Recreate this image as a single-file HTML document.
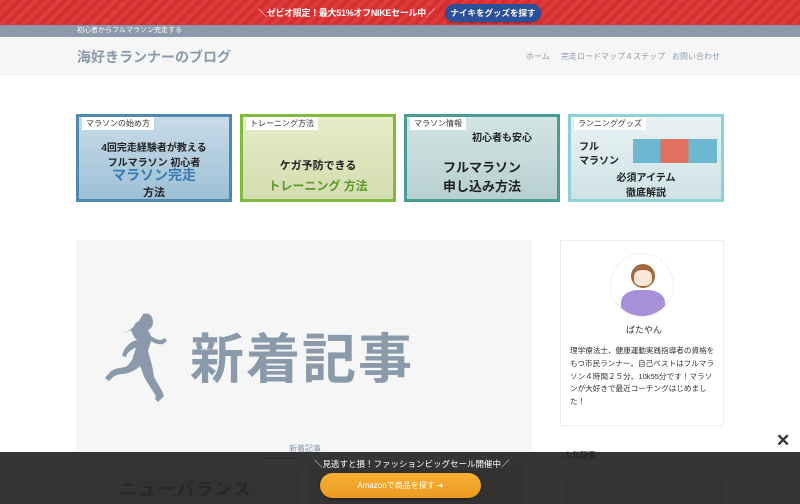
<!DOCTYPE html>
<html><head><meta charset="utf-8"><style>
*{margin:0;padding:0;box-sizing:border-box}
body{width:800px;height:504px;overflow:hidden;background:#fff;font-family:"Liberation Sans","Noto Sans CJK JP",sans-serif;position:relative}
.abs{position:absolute}
.top{left:0;top:0;width:800px;height:25px;background:repeating-linear-gradient(135deg,#e03a3a 0 4px,#d42f30 4px 8px)}
.top .t{left:258px;top:6px;color:#fff;font-size:9px;font-weight:bold;white-space:nowrap;letter-spacing:-0.3px}
.top .b{left:445px;top:4px;width:96px;height:18px;border-radius:9px;background:#2a4f9c;color:#fff;font-size:8.5px;font-weight:bold;text-align:center;line-height:18px;box-shadow:0 1px 2px rgba(0,0,0,.3)}
.sub{left:0;top:25px;width:800px;height:12px;background:#8a9aab;color:#fff;font-size:7px;line-height:12px;padding-left:77px}
.hdr{left:0;top:37px;width:800px;height:39px;background:#f6f6f6}
.title{left:77px;top:47px;font-size:14px;font-weight:bold;color:#8a9aab}
.nav{top:51px;font-size:8px;color:#8a9aab}
.card{top:114px;width:156px;height:88px;border:3px solid;overflow:hidden}
.card .lb{position:absolute;left:3px;top:0;background:#fff;font-size:8px;color:#333;padding:1px 4px}
.card .tx{position:absolute;left:0;right:0;text-align:center;font-weight:bold;color:#222}
.main{left:76px;top:240px;width:456px;height:264px;background:#f6f6f6}
.big{left:190px;top:315px;font-size:54px;font-weight:bold;color:#8a9aab;letter-spacing:2px}
.side{left:560px;top:240px;width:164px;height:186px;border:1px solid #eee;background:#fff}
.ov{left:0;top:452px;width:800px;height:52px;background:rgba(38,38,38,.93)}
</style></head><body>
<div class="abs top"><div class="abs t">＼ゼビオ限定！最大51%オフNIKEセール中／</div><div class="abs b">ナイキをグッズを探す</div></div>
<div class="abs sub">初心者からフルマラソン完走する</div>
<div class="abs hdr"></div>
<div class="abs title">海好きランナーのブログ</div>
<div class="abs nav" style="left:526px">ホーム</div>
<div class="abs nav" style="left:561px">完走ロードマップ４ステップ</div>
<div class="abs nav" style="left:672px">お問い合わせ</div>

<div class="abs card" style="left:76px;border-color:#4f88b2;background:linear-gradient(#c8dbe8,#9dc0d6)"><div class="lb">マラソンの始め方</div><div class="tx" style="top:22px;font-size:10px">4回完走経験者が教える<br>フルマラソン 初心者</div><div class="tx" style="top:50px;font-size:14px;color:#3a7cb0;line-height:16px">マラソン完走<br><span style="font-size:11px;color:#222">方法</span></div></div>
<div class="abs card" style="left:240px;border-color:#7fba3e;background:linear-gradient(#e6ecc8,#d4dcb0)"><div class="lb">トレーニング方法</div><div class="tx" style="top:40px;font-size:11px">ケガ予防できる</div><div class="tx" style="top:60px;font-size:12px;color:#5a9a2a">トレーニング 方法</div></div>
<div class="abs card" style="left:404px;border-color:#4a9c92;background:linear-gradient(#d2e4e4,#b8d0d0)"><div class="lb">マラソン情報</div><div class="tx" style="top:12px;font-size:10px;left:40px">初心者も安心</div><div class="tx" style="top:40px;font-size:13px">フルマラソン<br>申し込み方法</div></div>
<div class="abs card" style="left:568px;border-color:#8dd0d8;background:linear-gradient(#e8f2f4,#cfe2e6)"><div class="lb">ランニンググッズ</div><div class="abs" style="left:8px;top:24px;font-size:10px;font-weight:bold;color:#222;line-height:14px">フル<br>マラソン</div><div class="abs" style="left:62px;top:22px;width:84px;height:24px;background:linear-gradient(90deg,#6cb8d0 33%,#e07060 33% 66%,#6cb8d0 66%)"></div><div class="tx" style="top:52px;font-size:10px">必須アイテム<br>徹底解説</div></div>

<div class="abs main"></div>
<svg class="abs" style="left:105px;top:312px" width="76" height="92" viewBox="0 0 76 92"><path fill="#8a9aab" d="M38 2c6-2 10 2 10 8 0 4-2 7-5 8l3 6c3 2 6 4 10 4l4-2 2 3-4 3c-5 1-9-1-12-3l-3 10c2 8 5 16 6 26l8 14 2 5-6 6-3-3 1-3-9-14c-4-6-5-12-7-16-4 4-10 7-16 8-5 0-9 1-12 4l-3 3-4-3 5-6c5-4 10-4 15-5 3-1 5-4 7-7l4-12c-3 0-6 3-9 6l-1 3-4-1 2-6c4-6 8-9 13-10-3-2-5-7-6-10-3 1-6 3-7 3 4-2 8-4 10-7 1-3 3-4 5-5z"/></svg>
<div class="abs big">新着記事</div>
<div class="abs" style="left:289px;top:443px;font-size:8px;color:#8a9aab">新着記事</div>
<div class="abs" style="left:260px;top:458px;width:40px;height:1px;background:#555"></div>

<div class="abs side"></div>
<div class="abs" style="left:610px;top:253px;width:64px;height:64px;border-radius:50%;background:#fff;border:1px solid #f0f0f0;overflow:hidden"><div class="abs" style="left:20px;top:10px;width:24px;height:24px;border-radius:50%;background:#a0683c"></div><div class="abs" style="left:23px;top:16px;width:18px;height:16px;border-radius:40%;background:#fbe6d8"></div><div class="abs" style="left:10px;top:36px;width:44px;height:30px;border-radius:40% 40% 0 0;background:#a890d8"></div></div>
<div class="abs" style="left:626px;top:323px;font-size:9px;color:#333">ばたやん</div>
<div class="abs" style="left:570px;top:345px;width:148px;font-size:7.6px;line-height:12.8px;color:#333">理学療法士、健康運動実践指導者の資格をもつ市民ランナー。自己ベストはフルマラソン４時間２５分、10k55分です！マラソンが大好きで最近コーチングはじめました！</div>

<div class="abs" style="left:86px;top:465px;width:214px;height:39px;background:#dfe4ea"><div style="font-size:17px;font-weight:bold;color:#2a4f8c;padding:10px 0 0 34px;letter-spacing:2px">ニューバランス</div></div>
<div class="abs" style="left:310px;top:465px;width:212px;height:39px;background:#d8cfc4"></div>
<div class="abs" style="left:564px;top:450px;font-size:8px;font-weight:bold;color:#333">人気記事</div>
<div class="abs" style="left:560px;top:467px;width:164px;height:1px;background:#ccc"></div>
<div class="abs" style="left:564px;top:480px;width:160px;height:24px;background:#e8e0d0"></div>

<div class="abs ov"></div>
<div class="abs" style="left:314px;top:458px;font-size:8.5px;color:#fff">＼見逃すと損！ファッションビッグセール開催中／</div>
<div class="abs" style="left:320px;top:473px;width:161px;height:25px;border-radius:13px;background:linear-gradient(#f7b035,#ec9a20);color:#fff;font-size:8px;text-align:center;line-height:25px;box-shadow:0 1px 2px rgba(0,0,0,.4)">Amazonで商品を探す ➔</div>
<div class="abs" style="left:776px;top:431px;font-size:17px;font-weight:bold;color:#333">✕</div>
</body></html>
